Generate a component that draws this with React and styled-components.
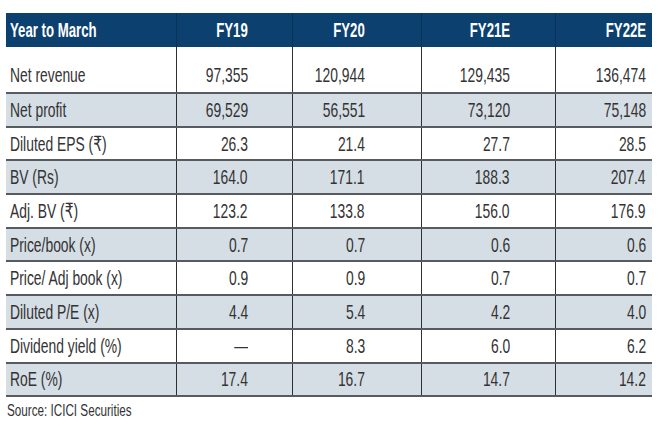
import React from "react";
import styled, { createGlobalStyle } from "styled-components";

const GlobalStyle = createGlobalStyle`
  html, body {
    margin: 0;
    padding: 0;
    background: #ffffff;
  }
  body {
    font-family: "Liberation Sans", Arial, "DejaVu Sans", sans-serif;
    color: #2b2b2b;
  }
`;

const COLS = "170px 116px 129px 134px 97px";
// right padding of each number column, so the figures line up as in the print
const PAD = [44, 56, 45, 6];

const Page = styled.div`
  width: 660px;
  height: 440px;
  padding: 13px 8px 0 6px;
  box-sizing: border-box;
`;

const Table = styled.div`
  width: 646px;
  display: flex;
  flex-direction: column;
`;

// the print uses a very narrow face; squeeze a regular sans to match
const Narrow = styled.span`
  display: inline-block;
  white-space: nowrap;
  transform: scaleX(${({ $k }) => $k || 0.66});
  transform-origin: ${({ $left }) => ($left ? "left" : "right")} center;
`;

const HeadRow = styled.div`
  display: grid;
  grid-template-columns: ${COLS};
  height: 34px;
  background: #0c416f;
  color: #ffffff;
  font-weight: 700;
  font-size: 20px;
`;

const HeadCell = styled.div`
  display: flex;
  align-items: center;
  justify-content: ${({ $label }) => ($label ? "flex-start" : "flex-end")};
  padding: ${({ $label, $pad }) => ($label ? "0 0 0 4px" : `0 ${$pad}px 0 0`)};
  border-left: ${({ $label }) => ($label ? "none" : "1px solid #0a3257")};
`;

const Row = styled.div`
  display: grid;
  grid-template-columns: ${COLS};
  box-sizing: border-box;
  height: ${({ $first }) => ($first ? "45px" : "33.7px")};
  border-top: ${({ $first }) => ($first ? "none" : "2px solid #555b60")};
  background: ${({ $shade }) => ($shade ? "#d5dee5" : "#ffffff")};
  font-size: 21px;
  color: #333333;

  &:last-child {
    border-bottom: 2px solid #555b60;
    height: 35.7px;
  }
`;

const Cell = styled.div`
  display: flex;
  align-items: center;
  justify-content: ${({ $label }) => ($label ? "flex-start" : "flex-end")};
  padding: ${({ $label, $pad }) => ($label ? "0 0 0 4px" : `0 ${$pad}px 0 0`)};
  padding-top: ${({ $first }) => ($first ? "11px" : "0")};
  border-left: ${({ $label }) => ($label ? "none" : "1px solid #2f2f2f")};
  white-space: nowrap;
`;

const Source = styled.div`
  margin-top: 5px;
  padding-left: 1px;
  font-size: 16px;
  color: #333333;
`;

const years = ["FY19", "FY20", "FY21E", "FY22E"];

const rows = [
  ["Net revenue", "97,355", "120,944", "129,435", "136,474"],
  ["Net profit", "69,529", "56,551", "73,120", "75,148"],
  ["Diluted EPS (₹)", "26.3", "21.4", "27.7", "28.5"],
  ["BV (Rs)", "164.0", "171.1", "188.3", "207.4"],
  ["Adj. BV (₹)", "123.2", "133.8", "156.0", "176.9"],
  ["Price/book (x)", "0.7", "0.7", "0.6", "0.6"],
  ["Price/ Adj book (x)", "0.9", "0.9", "0.7", "0.7"],
  ["Diluted P/E (x)", "4.4", "5.4", "4.2", "4.0"],
  ["Dividend yield (%)", "—", "8.3", "6.0", "6.2"],
  ["RoE (%)", "17.4", "16.7", "14.7", "14.2"],
];

const App = () => {
  return (
    <>
      <GlobalStyle />
      <Page>
        <Table>
          <HeadRow>
            <HeadCell $label>
              <Narrow $left>Year to March</Narrow>
            </HeadCell>
            {years.map((y, i) => (
              <HeadCell key={y} $pad={PAD[i]}>
                <Narrow>{y}</Narrow>
              </HeadCell>
            ))}
          </HeadRow>
          {rows.map((r, idx) => (
            <Row key={r[0]} $first={idx === 0} $shade={idx % 2 === 1}>
              <Cell $label $first={idx === 0}>
                <Narrow $left>{r[0]}</Narrow>
              </Cell>
              {r.slice(1).map((v, i) => (
                <Cell key={i} $pad={PAD[i]} $first={idx === 0}>
                  <Narrow>{v}</Narrow>
                </Cell>
              ))}
            </Row>
          ))}
        </Table>
        <Source>
          <Narrow $left $k={0.73}>
            Source: ICICI Securities
          </Narrow>
        </Source>
      </Page>
    </>
  );
};

export default App;
